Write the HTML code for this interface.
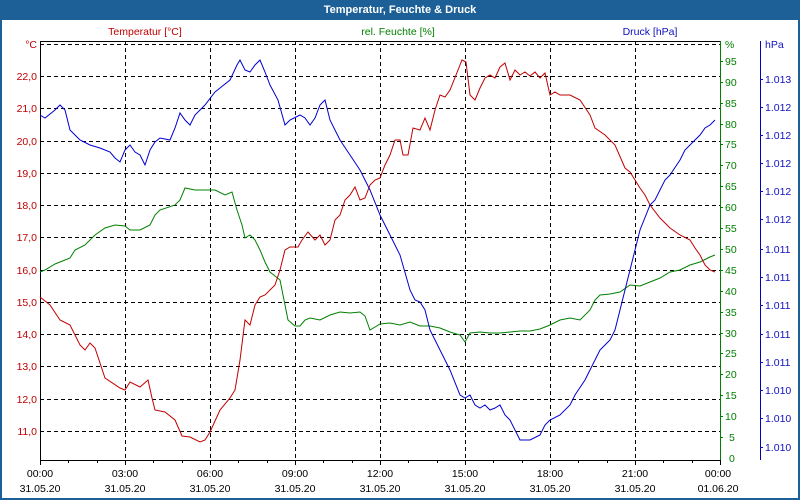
<!DOCTYPE html><html><head><style>
body{margin:0;width:800px;height:500px;overflow:hidden;background:#fff;font-family:"Liberation Sans",sans-serif}
</style></head><body>
<svg width="800" height="500" style="position:absolute;left:0;top:0" font-family="Liberation Sans, sans-serif" font-size="10.5">
<rect x="0" y="0" width="800" height="500" fill="#1c6097"/>
<rect x="2" y="20" width="796" height="478" fill="#fff"/>
<text x="400" y="13" fill="#fff" font-weight="bold" font-size="11" text-anchor="middle">Temperatur, Feuchte &amp; Druck</text>
<text x="145" y="35" fill="#c00000" text-anchor="middle">Temperatur [°C]</text>
<text x="398" y="35" fill="#008000" text-anchor="middle">rel. Feuchte [%]</text>
<text x="650" y="35" fill="#1010c0" text-anchor="middle">Druck [hPa]</text>
<g stroke="#000" stroke-dasharray="4,3" stroke-width="1">
<path d="M40 44.5H720M40 76.5H720M40 108.5H720M40 141.5H720M40 173.5H720M40 205.5H720M40 237.5H720M40 270.5H720M40 302.5H720M40 334.5H720M40 366.5H720M40 399.5H720M40 431.5H720"/>
<path d="M125.5 41V460M210.5 41V460M295.5 41V460M380.5 41V460M465.5 41V460M550.5 41V460M635.5 41V460"/>
</g>
<path d="M40.5 41V460.5H720" stroke="#000" fill="none"/>
<path d="M40 41.5H720" stroke="#000"/>
<g stroke="#000"><path d="M40.5 460v5M68.5 460v3M97.5 460v3M125.5 460v5M153.5 460v3M182.5 460v3M210.5 460v5M238.5 460v3M267.5 460v3M295.5 460v5M323.5 460v3M352.5 460v3M380.5 460v5M408.5 460v3M437.5 460v3M465.5 460v5M493.5 460v3M522.5 460v3M550.5 460v5M578.5 460v3M607.5 460v3M635.5 460v5M663.5 460v3M692.5 460v3M720.5 460v5"/></g>
<path d="M720.5 41V460" stroke="#008000"/>
<path d="M760.5 41V460" stroke="#0000c0"/>
<g fill="#c00000" text-anchor="end">
<text x="37" y="48">°C</text><text x="37" y="80">22,0</text><text x="37" y="112">21,0</text><text x="37" y="145">20,0</text><text x="37" y="177">19,0</text><text x="37" y="209">18,0</text><text x="37" y="241">17,0</text><text x="37" y="274">16,0</text><text x="37" y="306">15,0</text><text x="37" y="338">14,0</text><text x="37" y="370">13,0</text><text x="37" y="403">12,0</text><text x="37" y="435">11,0</text>
</g>
<g fill="#008000" stroke="#008000">
<g stroke="none"><text x="725" y="48">%</text>
<text x="725" y="65">95</text><text x="725" y="86">90</text><text x="725" y="107">85</text><text x="725" y="128">80</text><text x="725" y="148">75</text><text x="725" y="169">70</text><text x="725" y="190">65</text><text x="725" y="211">60</text><text x="725" y="232">55</text><text x="725" y="253">50</text><text x="725" y="274">45</text><text x="725" y="295">40</text><text x="725" y="316">35</text><text x="725" y="337">30</text><text x="725" y="357">25</text><text x="725" y="378">20</text><text x="725" y="399">15</text><text x="725" y="420">10</text><text x="729" y="441">5</text><text x="729" y="462">0</text></g>
<path d="M720 61.5h3M720 82.5h3M720 103.5h3M720 124.5h3M720 144.5h3M720 165.5h3M720 186.5h3M720 207.5h3M720 228.5h3M720 249.5h3M720 270.5h3M720 291.5h3M720 312.5h3M720 333.5h3M720 353.5h3M720 374.5h3M720 395.5h3M720 416.5h3M720 437.5h3"/>
</g>
<g fill="#1010c0" stroke="#1010c0">
<g stroke="none"><text x="765" y="48">hPa</text>
<text x="765" y="83">1.013</text><text x="765" y="111">1.012</text><text x="765" y="139">1.012</text><text x="765" y="167">1.012</text><text x="765" y="195">1.012</text><text x="765" y="223">1.012</text><text x="765" y="253">1.011</text><text x="765" y="281">1.011</text><text x="765" y="309">1.011</text><text x="765" y="338">1.011</text><text x="765" y="366">1.011</text><text x="765" y="394">1.010</text><text x="765" y="422">1.010</text><text x="765" y="451">1.010</text></g>
<path d="M760 79.5h3M760 107.5h3M760 135.5h3M760 163.5h3M760 191.5h3M760 219.5h3M760 249.5h3M760 277.5h3M760 305.5h3M760 334.5h3M760 362.5h3M760 390.5h3M760 418.5h3M760 447.5h3"/>
</g>
<g fill="#000" text-anchor="middle">
<text x="40" y="477">00:00</text><text x="125" y="477">03:00</text><text x="210" y="477">06:00</text><text x="295" y="477">09:00</text><text x="380" y="477">12:00</text><text x="465" y="477">15:00</text><text x="550" y="477">18:00</text><text x="635" y="477">21:00</text><text x="718" y="477">00:00</text>
<text x="40" y="492">31.05.20</text><text x="125" y="492">31.05.20</text><text x="210" y="492">31.05.20</text><text x="295" y="492">31.05.20</text><text x="380" y="492">31.05.20</text><text x="465" y="492">31.05.20</text><text x="550" y="492">31.05.20</text><text x="635" y="492">31.05.20</text><text x="718" y="492">01.06.20</text>
</g>
<g fill="none" stroke-width="1">
<polyline stroke="#008000" points="40,272 45,270 55,264 65,260 70,258 75,250 85,245 95,235 105,228 115,225 125,226 130,230 140,230 150,225 155,215 160,210 175,205 180,200 185,188 195,190 215,190 225,195 232,192 237,210 242,225 245,238 250,235 255,240 260,250 265,262 270,272 275,276 280,280 285,305 288,320 295,326 300,326 305,320 310,318 320,320 330,315 340,312 350,313 360,312 365,316 370,330 380,324 390,323 400,325 410,322 420,326 430,326 440,328 450,332 460,335 465,342 470,333 480,332 490,333 500,333 510,332 520,331 530,331 540,329 550,325 560,320 570,318 580,320 590,310 595,300 600,295 610,294 620,292 630,285 640,286 650,282 660,278 670,272 680,270 690,265 700,262 710,257 715,255"/>
<polyline stroke="#c00000" points="40,297 50,305 60,320 70,325 80,345 85,350 90,343 95,348 105,378 120,388 125,390 130,382 140,387 148,380 152,398 155,410 165,412 175,420 182,436 190,437 200,442 205,440 210,432 220,410 230,398 235,390 240,360 245,320 250,325 255,305 260,297 265,295 275,285 280,270 285,250 290,247 298,247 302,240 308,232 315,240 320,235 325,245 330,240 335,220 340,215 345,200 350,195 355,187 360,200 365,198 370,185 375,180 380,178 385,165 390,155 395,140 400,140 403,155 408,155 413,128 420,130 425,118 430,130 435,110 440,95 445,97 450,90 458,70 462,60 466,62 470,95 475,100 480,88 485,78 490,75 495,78 500,67 505,63 510,80 515,70 520,75 525,72 530,76 535,72 540,78 545,73 550,95 555,92 560,95 570,95 580,100 590,115 595,128 605,135 615,145 625,168 630,172 640,188 645,195 650,205 660,218 670,228 680,235 690,240 695,248 700,255 705,265 710,270 715,272"/>
<polyline stroke="#0000d0" points="40,115 45,118 55,110 60,105 65,110 70,130 75,135 80,140 90,145 100,148 110,152 115,158 120,162 125,150 130,145 135,152 140,155 145,165 150,150 155,142 160,138 170,140 175,128 180,113 185,120 190,125 195,115 205,105 215,92 220,88 230,80 237,65 240,60 245,70 250,72 255,65 260,60 265,72 270,85 278,100 285,125 290,120 300,115 305,118 310,125 315,118 320,105 325,100 330,120 340,140 350,155 360,170 370,190 380,215 390,235 400,255 410,290 415,300 420,302 425,310 430,330 440,350 450,370 460,395 465,398 470,395 475,405 480,408 485,405 490,410 495,408 500,405 505,415 510,420 515,430 520,440 530,440 540,435 545,425 550,420 560,415 570,405 575,395 585,380 590,370 600,350 605,345 610,340 615,330 620,310 630,270 640,230 650,205 655,200 665,180 670,175 680,160 685,150 690,145 700,135 705,128 710,125 715,120"/>
</g>
</svg>
</body></html>
